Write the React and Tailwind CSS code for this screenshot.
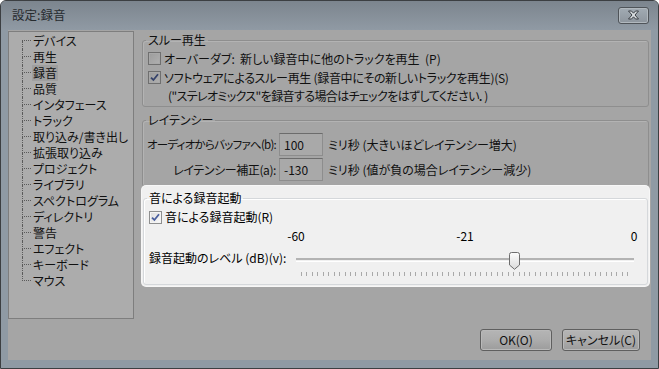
import React from 'react';

const treeItems = [
  'デバイス',
  '再生',
  '録音',
  '品質',
  'インタフェース',
  'トラック',
  '取り込み/書き出し',
  '拡張取り込み',
  'プロジェクト',
  'ライブラリ',
  'スペクトログラム',
  'ディレクトリ',
  '警告',
  'エフェクト',
  'キーボード',
  'マウス',
];

const levelMin = -60;
const levelMax = 0;
const levelValue = -21;

function CheckBox({ checked, dim }) {
  return (
    <span
      className={
        dim
          ? 'w-[13px] h-[13px] shrink-0 border border-[#6f6f6f] bg-gradient-to-br from-[#9c9c9c] to-[#b0b0b0] shadow-[inset_0_0_0_1px_#a8a8a8] flex items-center justify-center'
          : 'w-[13px] h-[13px] shrink-0 border border-[#8e8f8f] bg-gradient-to-br from-[#dcdcdc] to-[#fbfbfb] shadow-[inset_0_0_0_1px_#f4f4f4] flex items-center justify-center'
      }
    >
      {checked && (
        <svg width="9" height="9" viewBox="0 0 9 9">
          <path
            d="M1 4.6 L3.4 7 L8 1.3"
            fill="none"
            stroke={dim ? '#35426a' : '#4a5f9e'}
            strokeWidth="1.8"
          />
        </svg>
      )}
    </span>
  );
}

function TreeRow({ label, first, last, selected }) {
  return (
    <div className="flex h-[16px] items-center">
      <div className="w-[9px] h-full flex flex-col shrink-0">
        <div
          className={
            first
              ? 'h-[8px] border-b border-dotted border-[#5a5a5a]'
              : 'h-[8px] border-l border-b border-dotted border-[#5a5a5a]'
          }
        />
        <div className={last ? 'h-[8px]' : 'h-[8px] border-l border-dotted border-[#5a5a5a]'} />
      </div>
      <span
        className={
          selected
            ? 'ml-[1px] px-[1px] leading-[16px] bg-[#9f9f9f] whitespace-nowrap'
            : 'ml-[1px] px-[1px] leading-[16px] whitespace-nowrap'
        }
      >
        {label}
      </span>
    </div>
  );
}

function DimInput({ value }) {
  return (
    <div className="w-[44px] h-[23px] shrink-0 border border-[#8d8d8d] border-t-[#6c6c6c] bg-[#a9a9a9] pl-[4px] flex items-center leading-none">
      {value}
    </div>
  );
}

function Button({ label, width }) {
  return (
    <button
      className={
        width +
        ' h-[22px] rounded-[3px] border border-[#5f5f5f] bg-gradient-to-b from-[#b5b5b5] via-[#acacac] to-[#9c9c9c] shadow-[inset_0_0_0_1px_#b9b9b9] text-[12px] text-[#121212] leading-none flex items-center justify-center'
      }
    >
      {label}
    </button>
  );
}

export default function App() {
  const frac = (levelValue - levelMin) / (levelMax - levelMin);
  const ticks = Array.from({ length: levelMax - levelMin + 1 }, (_, i) => i);

  return (
    <div className="w-[659px] h-[369px] overflow-hidden border border-[#3c3f42] rounded-t-[6px] bg-[#8f9aa4] flex flex-col font-['Noto_Sans_CJK_JP',sans-serif] [font-feature-settings:'palt'] text-[12px] text-[#101010]">
      {/* title bar */}
      <div className="h-[29px] shrink-0 flex items-center justify-between pl-[11px] pr-[9px] bg-gradient-to-b from-[#7c858e] to-[#909aa4]">
        <span className="text-[12.5px] text-[#272b2f] leading-none">設定:録音</span>
        <div className="w-[31px] h-[17px] mt-[-1px] rounded-[3px] border border-[#4f5459] bg-gradient-to-b from-[#a2abb3] to-[#8d959d] shadow-[inset_0_0_0_1px_#b1b8be] flex items-center justify-center">
          <svg width="13" height="10" viewBox="0 0 13 10">
            <path
              d="M1.5 1 H4.5 L6.5 3.2 L8.5 1 H11.5 L8 5 L11.5 9 H8.5 L6.5 6.8 L4.5 9 H1.5 L5 5 Z"
              fill="#d9dde0"
              stroke="#3a3f44"
              strokeWidth="1"
              strokeLinejoin="round"
            />
          </svg>
        </div>
      </div>

      {/* client area */}
      <div className="mx-[7px] h-[330px] shrink-0 bg-[#a5a5a5] flex flex-col">
        <div className="flex mt-[1px]">
          {/* tree */}
          <div className="w-[126px] h-[288px] shrink-0 border border-[#7e7e7e] bg-[#acacac] pl-[13px] pt-[1px]">
            {treeItems.map((t, i) => (
              <TreeRow
                key={t}
                label={t}
                first={i === 0}
                last={i === treeItems.length - 1}
                selected={t === '録音'}
              />
            ))}
          </div>

          {/* right side */}
          <div className="w-[507px] ml-[8px] flex flex-col">
            <fieldset className="mt-[1px] border border-[#8e8e8e] rounded-[3px] shadow-[inset_1px_1px_0_#b3b3b3] pl-[3px] pr-[5px] pb-[2px]">
              <legend className="px-[2px] leading-[16px]">スルー再生</legend>
              <div className="pl-[2px] pt-[1px]">
                <div className="h-[19px] flex items-center gap-[3px]">
                  <CheckBox dim />
                  <span className="leading-[16px] whitespace-pre">
                    オーバーダブ:  新しい録音中に他のトラックを再生  (P)
                  </span>
                </div>
                <div className="h-[19px] flex items-center gap-[3px]">
                  <CheckBox dim checked />
                  <span className="leading-[16px] whitespace-nowrap tracking-[-0.3px]">
                    ソフトウェアによるスルー再生 (録音中にその新しいトラックを再生)(S)
                  </span>
                </div>
                <div className="h-[17px] flex items-center pl-[20px]">
                  <span className="leading-[16px] whitespace-nowrap tracking-[-0.6px]">
                    ("ステレオミックス"を録音する場合はチェックをはずしてください．)
                  </span>
                </div>
              </div>
            </fieldset>

            <fieldset className="mt-[5px] border border-[#8e8e8e] rounded-[3px] shadow-[inset_1px_1px_0_#b3b3b3] pl-[3px] pr-[5px] pb-[4px]">
              <legend className="px-[2px] leading-[16px]">レイテンシー</legend>
              <div className="pt-[4px]">
                <div className="h-[25px] flex items-center">
                  <div className="w-[130px] flex justify-end">
                    <span className="whitespace-nowrap text-[11.5px] tracking-[-0.75px]">オーディオからバッファへ(b):</span>
                  </div>
                  <div className="ml-[3px]">
                    <DimInput value="100" />
                  </div>
                  <span className="ml-[5px] whitespace-nowrap">ミリ秒 (大きいほどレイテンシー増大)</span>
                </div>
                <div className="h-[25px] flex items-center">
                  <div className="w-[130px] flex justify-end">
                    <span className="whitespace-nowrap tracking-[-0.4px]">レイテンシー補正(a):</span>
                  </div>
                  <div className="ml-[3px]">
                    <DimInput value="-130" />
                  </div>
                  <span className="ml-[5px] whitespace-nowrap">ミリ秒 (値が負の場合レイテンシー減少)</span>
                </div>
              </div>
            </fieldset>

            {/* highlighted group */}
            <div className="mt-[-1px] h-[100px] rounded-[4px] bg-[#f0f0f0] shadow-[0_0_0_1px_#f7f7f7] pt-[4px] px-[1px] text-black">
              <fieldset className="border border-[#d5d8db] rounded-[3px] shadow-[inset_1px_1px_0_#ffffff] pl-[3px] pr-[5px] pb-[8px]">
                <legend className="px-[2px] leading-[16px]">音による録音起動</legend>
                <div className="pl-[2px]">
                  <div className="mt-[2px] h-[18px] flex items-center gap-[3px]">
                    <CheckBox checked />
                    <span className="leading-[16px] whitespace-nowrap">音による録音起動(R)</span>
                  </div>

                  <div className="mt-[2px] grid grid-cols-[147px_338px]">
                    <div />
                    <div className="h-[16px] -mx-[9px] flex justify-between leading-[16px]">
                      <span className="w-[18px] text-center">-60</span>
                      <span className="w-[18px] text-center">-21</span>
                      <span className="w-[18px] text-center">0</span>
                    </div>

                    <div className="mt-[4px] h-[20px] flex items-center whitespace-nowrap">
                      録音起動のレベル (dB)(v):
                    </div>
                    <div className="mt-[4px] h-[20px] relative pt-[10px]">
                      <div className="h-[4px] border-t-[2px] border-b border-t-[#b3b3b3] border-b-white" />
                      <svg
                        className="absolute top-[4px]"
                        style={{ left: 5 + frac * 328 - 5.5 }}
                        width="11"
                        height="18"
                        viewBox="0 0 11 18"
                      >
                        <defs>
                          <linearGradient id="thumbFill" x1="0" y1="0" x2="0" y2="1">
                            <stop offset="0" stopColor="#fdfdfd" />
                            <stop offset="1" stopColor="#dadada" />
                          </linearGradient>
                        </defs>
                        <path
                          d="M0.5 2.5 Q0.5 0.5 2.5 0.5 H8.5 Q10.5 0.5 10.5 2.5 V13 L5.5 17.3 L0.5 13 Z"
                          fill="url(#thumbFill)"
                          stroke="#6e6e6e"
                          strokeWidth="1"
                        />
                      </svg>
                    </div>

                    <div />
                    <div className="mt-[4px] h-[4px] mx-[5px] flex justify-between">
                      {ticks.map((i) => (
                        <span key={i} className="w-[1px] h-full bg-[#a9a9a9]" />
                      ))}
                    </div>
                  </div>
                </div>
              </fieldset>
            </div>
          </div>
        </div>

        {/* buttons */}
        <div className="mt-[10px] flex justify-end gap-[10px] pr-[11px]">
          <Button label="OK(O)" width="w-[72px]" />
          <Button label="キャンセル(C)" width="w-[78px]" />
        </div>
      </div>
    </div>
  );
}
